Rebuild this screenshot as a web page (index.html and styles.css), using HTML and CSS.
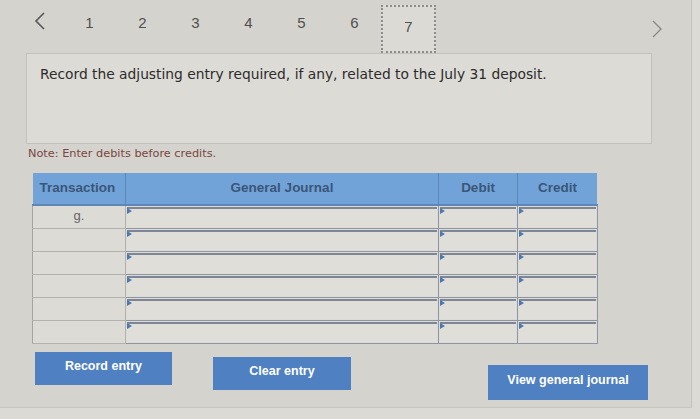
FILE: index.html
```html
<!DOCTYPE html>
<html>
<head>
<meta charset="utf-8">
<link rel="stylesheet" href="styles.css">
</head>
<body>
<div class="screen">
  <div class="panel">
    <nav class="steps">
      <span class="chev chev-left"><svg width="12" height="18" viewBox="0 0 12 18"><path d="M10 1 L2 9 L10 17" fill="none" stroke="#555" stroke-width="1.6"/></svg></span>
      <ul class="nums">
        <li>1</li><li>2</li><li>3</li><li>4</li><li>5</li><li>6</li><li class="current">7</li>
      </ul>
      <span class="chev chev-right"><svg width="12" height="18" viewBox="0 0 12 18"><path d="M2 1 L10 9 L2 17" fill="none" stroke="#8a8a8a" stroke-width="1.4"/></svg></span>
    </nav>
    <div class="question">Record the adjusting entry required, if any, related to the July 31 deposit.</div>
    <p class="note">Note: Enter debits before credits.</p>
    <table class="journal">
      <thead>
        <tr><th class="c-tr">Transaction</th><th class="c-gj">General Journal</th><th class="c-dr">Debit</th><th class="c-cr">Credit</th></tr>
      </thead>
      <tbody>
        <tr><td class="tr">g.</td><td><div class="inp"></div></td><td><div class="inp"></div></td><td><div class="inp"></div></td></tr>
        <tr><td class="tr"></td><td><div class="inp"></div></td><td><div class="inp"></div></td><td><div class="inp"></div></td></tr>
        <tr><td class="tr"></td><td><div class="inp"></div></td><td><div class="inp"></div></td><td><div class="inp"></div></td></tr>
        <tr><td class="tr"></td><td><div class="inp"></div></td><td><div class="inp"></div></td><td><div class="inp"></div></td></tr>
        <tr><td class="tr"></td><td><div class="inp"></div></td><td><div class="inp"></div></td><td><div class="inp"></div></td></tr>
        <tr><td class="tr"></td><td><div class="inp"></div></td><td><div class="inp"></div></td><td><div class="inp"></div></td></tr>
      </tbody>
    </table>
    <div class="actions">
      <button class="btn btn-record">Record entry</button>
      <button class="btn btn-clear">Clear entry</button>
      <button class="btn btn-view">View general journal</button>
    </div>
  </div>
</div>
</body>
</html>
```

FILE: styles.css
```css
html, body {
  margin: 0;
  padding: 0;
  background: #dcdad5;
}
.screen {
  width: 700px;
  height: 419px;
  overflow: hidden;
}
.panel {
  width: 692px;
  height: 408px;
  background: #d5d3ce;
  border-right: 1px solid #c4c2bd;
  border-bottom: 1px solid #c8c6c1;
  box-sizing: border-box;
}
.steps {
  display: flex;
  align-items: flex-start;
  height: 48px;
  padding-top: 5px;
  font-family: "Liberation Sans", Arial, sans-serif;
}
.chev {
  display: flex;
  align-items: center;
  height: 30px;
}
.chev-left { margin-left: 34px; margin-top: 1px; }
.chev-right { margin-left: 215px; margin-top: 9px; }
.nums {
  display: flex;
  list-style: none;
  margin: 0 0 0 17px;
  padding: 0;
}
.nums li {
  width: 53px;
  height: 48px;
  box-sizing: border-box;
  display: flex;
  align-items: center;
  justify-content: center;
  font-size: 15px;
  color: #505050;
  padding-bottom: 14px;
}
.nums li.current {
  border: 2px dotted #8c8c8c;
  background: #dcdad5;
  padding-bottom: 6px;
  width: 55px;
}
.question {
  margin: 0 0 0 26px;
  width: 626px;
  height: 91px;
  box-sizing: border-box;
  background: #dddbd6;
  border: 1px solid #c3c1bc;
  padding: 12px 0 0 13px;
  font-family: "DejaVu Sans", Verdana, sans-serif;
  font-size: 13.8px;
  color: #2c2c2c;
}
.note {
  margin: 3px 0 0 28px;
  font-family: "DejaVu Sans", Verdana, sans-serif;
  font-size: 11.3px;
  color: #7a463f;
}
.journal {
  margin: 13px 0 0 32px;
  border-collapse: collapse;
  font-family: "Liberation Sans", Arial, sans-serif;
}
.journal th {
  background: #72a3d8;
  color: #3a5679;
  font-size: 13.5px;
  font-weight: bold;
  height: 28px;
  padding: 0 0 3px 0;
  border-right: 1px solid #5c87b8;
  border-bottom: 2px solid #5f86b5;
}
.journal th:last-child { border-right: 0; }
.c-tr { width: 93px; text-align: left; padding-left: 7px !important; box-sizing: border-box; }
.c-gj { width: 312px; }
.c-dr { width: 78px; }
.c-cr { width: 79px; }
.journal td {
  height: 23px;
  padding: 0 1px;
  border: 1px solid #8e96a6;
  background: #dddbd6;
  box-sizing: border-box;
}
.journal td.tr {
  border: 1px solid #b3b1ad;
  border-left: 1px solid #a5a3a0;
  font-size: 13px;
  color: #666;
  text-align: center;
  padding-top: 2px;
  vertical-align: top;
}
.inp {
  position: relative;
  height: 20px;
  border-top: 2px solid #7d8596;
  background: #e0ded9;
  box-sizing: border-box;
}
.inp::before {
  content: "";
  position: absolute;
  left: 0;
  top: -1px;
  border-left: 5px solid #4d78ad;
  border-top: 3px solid transparent;
  border-bottom: 3px solid transparent;
}
.actions {
  display: flex;
  align-items: flex-start;
  margin-top: 8px;
  padding-left: 35px;
}
.btn {
  border: 0;
  background: #4f80c1;
  color: #fff;
  font-family: "Liberation Sans", Arial, sans-serif;
  font-size: 12.5px;
  font-weight: bold;
  height: 33px;
  padding: 0 0 4px 0;
}
.btn-record { width: 137px; }
.btn-clear { width: 138px; margin-left: 41px; margin-top: 5px; }
.btn-view { width: 160px; height: 35px; margin-left: 137px; margin-top: 13px; }
```
